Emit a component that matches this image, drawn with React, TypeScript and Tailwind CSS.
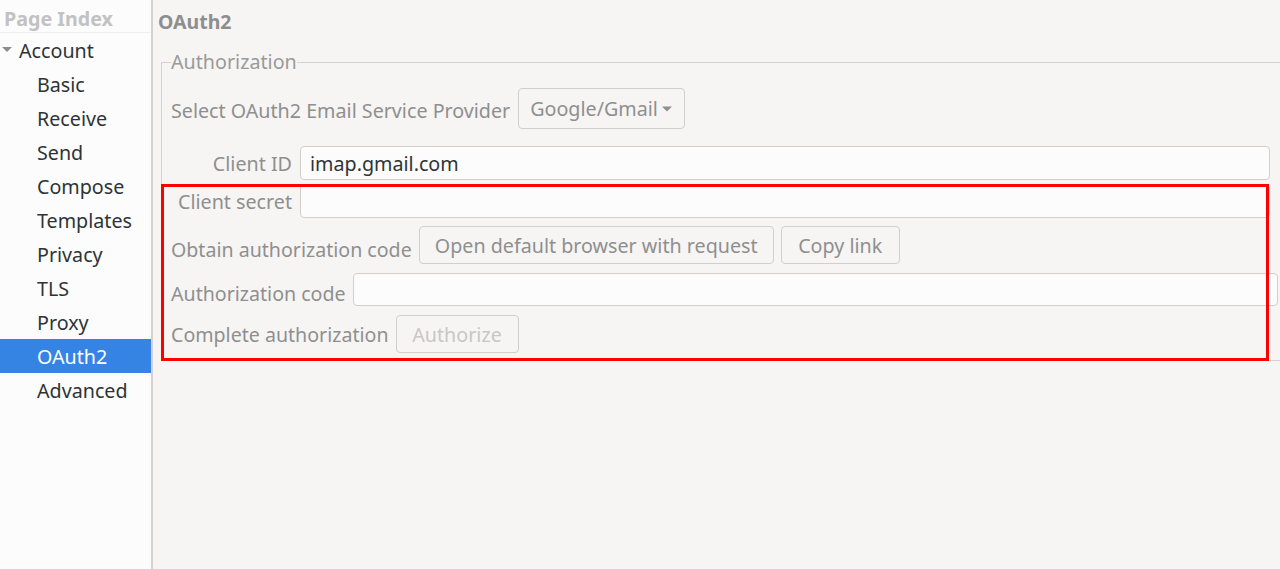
import { ReactNode } from 'react';

const pages = ['Basic', 'Receive', 'Send', 'Compose', 'Templates', 'Privacy', 'TLS', 'Proxy', 'OAuth2', 'Advanced'];

function Btn({ children, w, disabled }: { children: ReactNode; w: string; disabled?: boolean }) {
  return (
    <div
      className={`${w} h-[38px] shrink-0 flex items-center justify-center rounded-[4px] border border-[#d3cec9] bg-[#f6f5f4] ${
        disabled ? 'text-[#c9c6c3]' : 'text-[#8f8f8f]'
      }`}
    >
      {children}
    </div>
  );
}

function Field({ value, w, h = 'h-[34px]' }: { value?: string; w: string; h?: string }) {
  return (
    <div className={`${w} ${h} shrink-0 flex items-center px-[9px] rounded-[4px] border border-[#d3cec9] bg-[#fcfcfc] text-[#2e3436]`}>
      {value}
    </div>
  );
}

export default function App() {
  return (
    <div className="relative w-[1280px] h-[569px] overflow-hidden flex bg-[#f6f5f4] text-[19.7px] leading-[27px]" style={{ fontFamily: '"Noto Sans", "Open Sans", sans-serif' }}>
      <aside className="w-[153px] shrink-0 bg-[#fcfcfc] border-r-2 border-[#d6d1cd]">
        <div className="h-[33px] flex items-center px-[4px] pt-[4px] border-b border-[#efeeed] font-bold text-[#c2c2c2] text-[19.7px]">
          Page Index
        </div>
        <div className="h-[34px] flex items-center text-[#2e3436]">
          <svg width="19" height="10" viewBox="0 0 19 10" className="shrink-0">
            <path d="M2 2 L12 2 L7 7 Z" fill="#8b8e8f" />
          </svg>
          <span>Account</span>
        </div>
        {pages.map((p) => (
          <div
            key={p}
            className={`h-[34px] flex items-center pl-[37px] ${p === 'OAuth2' ? 'bg-[#3584e4] text-white' : 'text-[#2e3436]'}`}
          >
            {p}
          </div>
        ))}
      </aside>

      <main className="flex-1 pl-[5px] pt-[9px] text-[#8f8f8f]">
        <div className="font-bold text-[19.5px] leading-[26px] text-[#8e8e8e]">OAuth2</div>
        <fieldset className="mt-[14px] ml-[3px] w-[1140px] border border-[#d6d1cd] px-[9px] pt-[13px] pb-[7px]">
          <legend className="px-0 text-[19.7px] leading-[26px] text-[#9a9a9a]">Authorization</legend>

          <div className="flex items-center gap-[8px]">
            <span className="pt-[3px]">Select OAuth2 Email Service Provider</span>
            <div className="w-[167px] h-[41px] flex items-center pl-[11px] gap-[3px] rounded-[4px] border border-[#d3cec9] bg-[#f6f5f4]">
              <span>Google/Gmail</span>
              <svg width="12" height="8" viewBox="0 0 12 8">
                <path d="M1 1.5 L11 1.5 L6 6.5 Z" fill="#8f8f8f" />
              </svg>
            </div>
          </div>

          <div className="mt-[17px] flex items-center gap-[8px]">
            <span className="w-[121px] text-right shrink-0">Client ID</span>
            <Field value="imap.gmail.com" w="w-[970px]" />
          </div>

          <div className="mt-[4px] flex items-center gap-[8px]">
            <span className="w-[121px] text-right shrink-0">Client secret</span>
            <Field w="w-[970px]" />
          </div>

          <div className="mt-[8px] flex items-center gap-[7px]">
            <span className="pt-[8px] text-[19.6px]">Obtain authorization code</span>
            <Btn w="w-[355px]">Open default browser with request</Btn>
            <Btn w="w-[119px]">Copy link</Btn>
          </div>

          <div className="mt-[8px] flex items-center gap-[7px]">
            <span className="pt-[8px] text-[19.6px]">Authorization code</span>
            <Field w="w-[925px]" h="h-[33px]" />
          </div>

          <div className="mt-[8px] flex items-center gap-[7px]">
            <span className="text-[19.6px]">Complete authorization</span>
            <Btn w="w-[123px]" disabled>
              Authorize
            </Btn>
          </div>
        </fieldset>
      </main>

      {/* annotation overlay */}
      <div className="absolute left-[161px] top-[184px] w-[1108px] h-[177px] border-[3px] border-[#ff0000] pointer-events-none" />
    </div>
  );
}
